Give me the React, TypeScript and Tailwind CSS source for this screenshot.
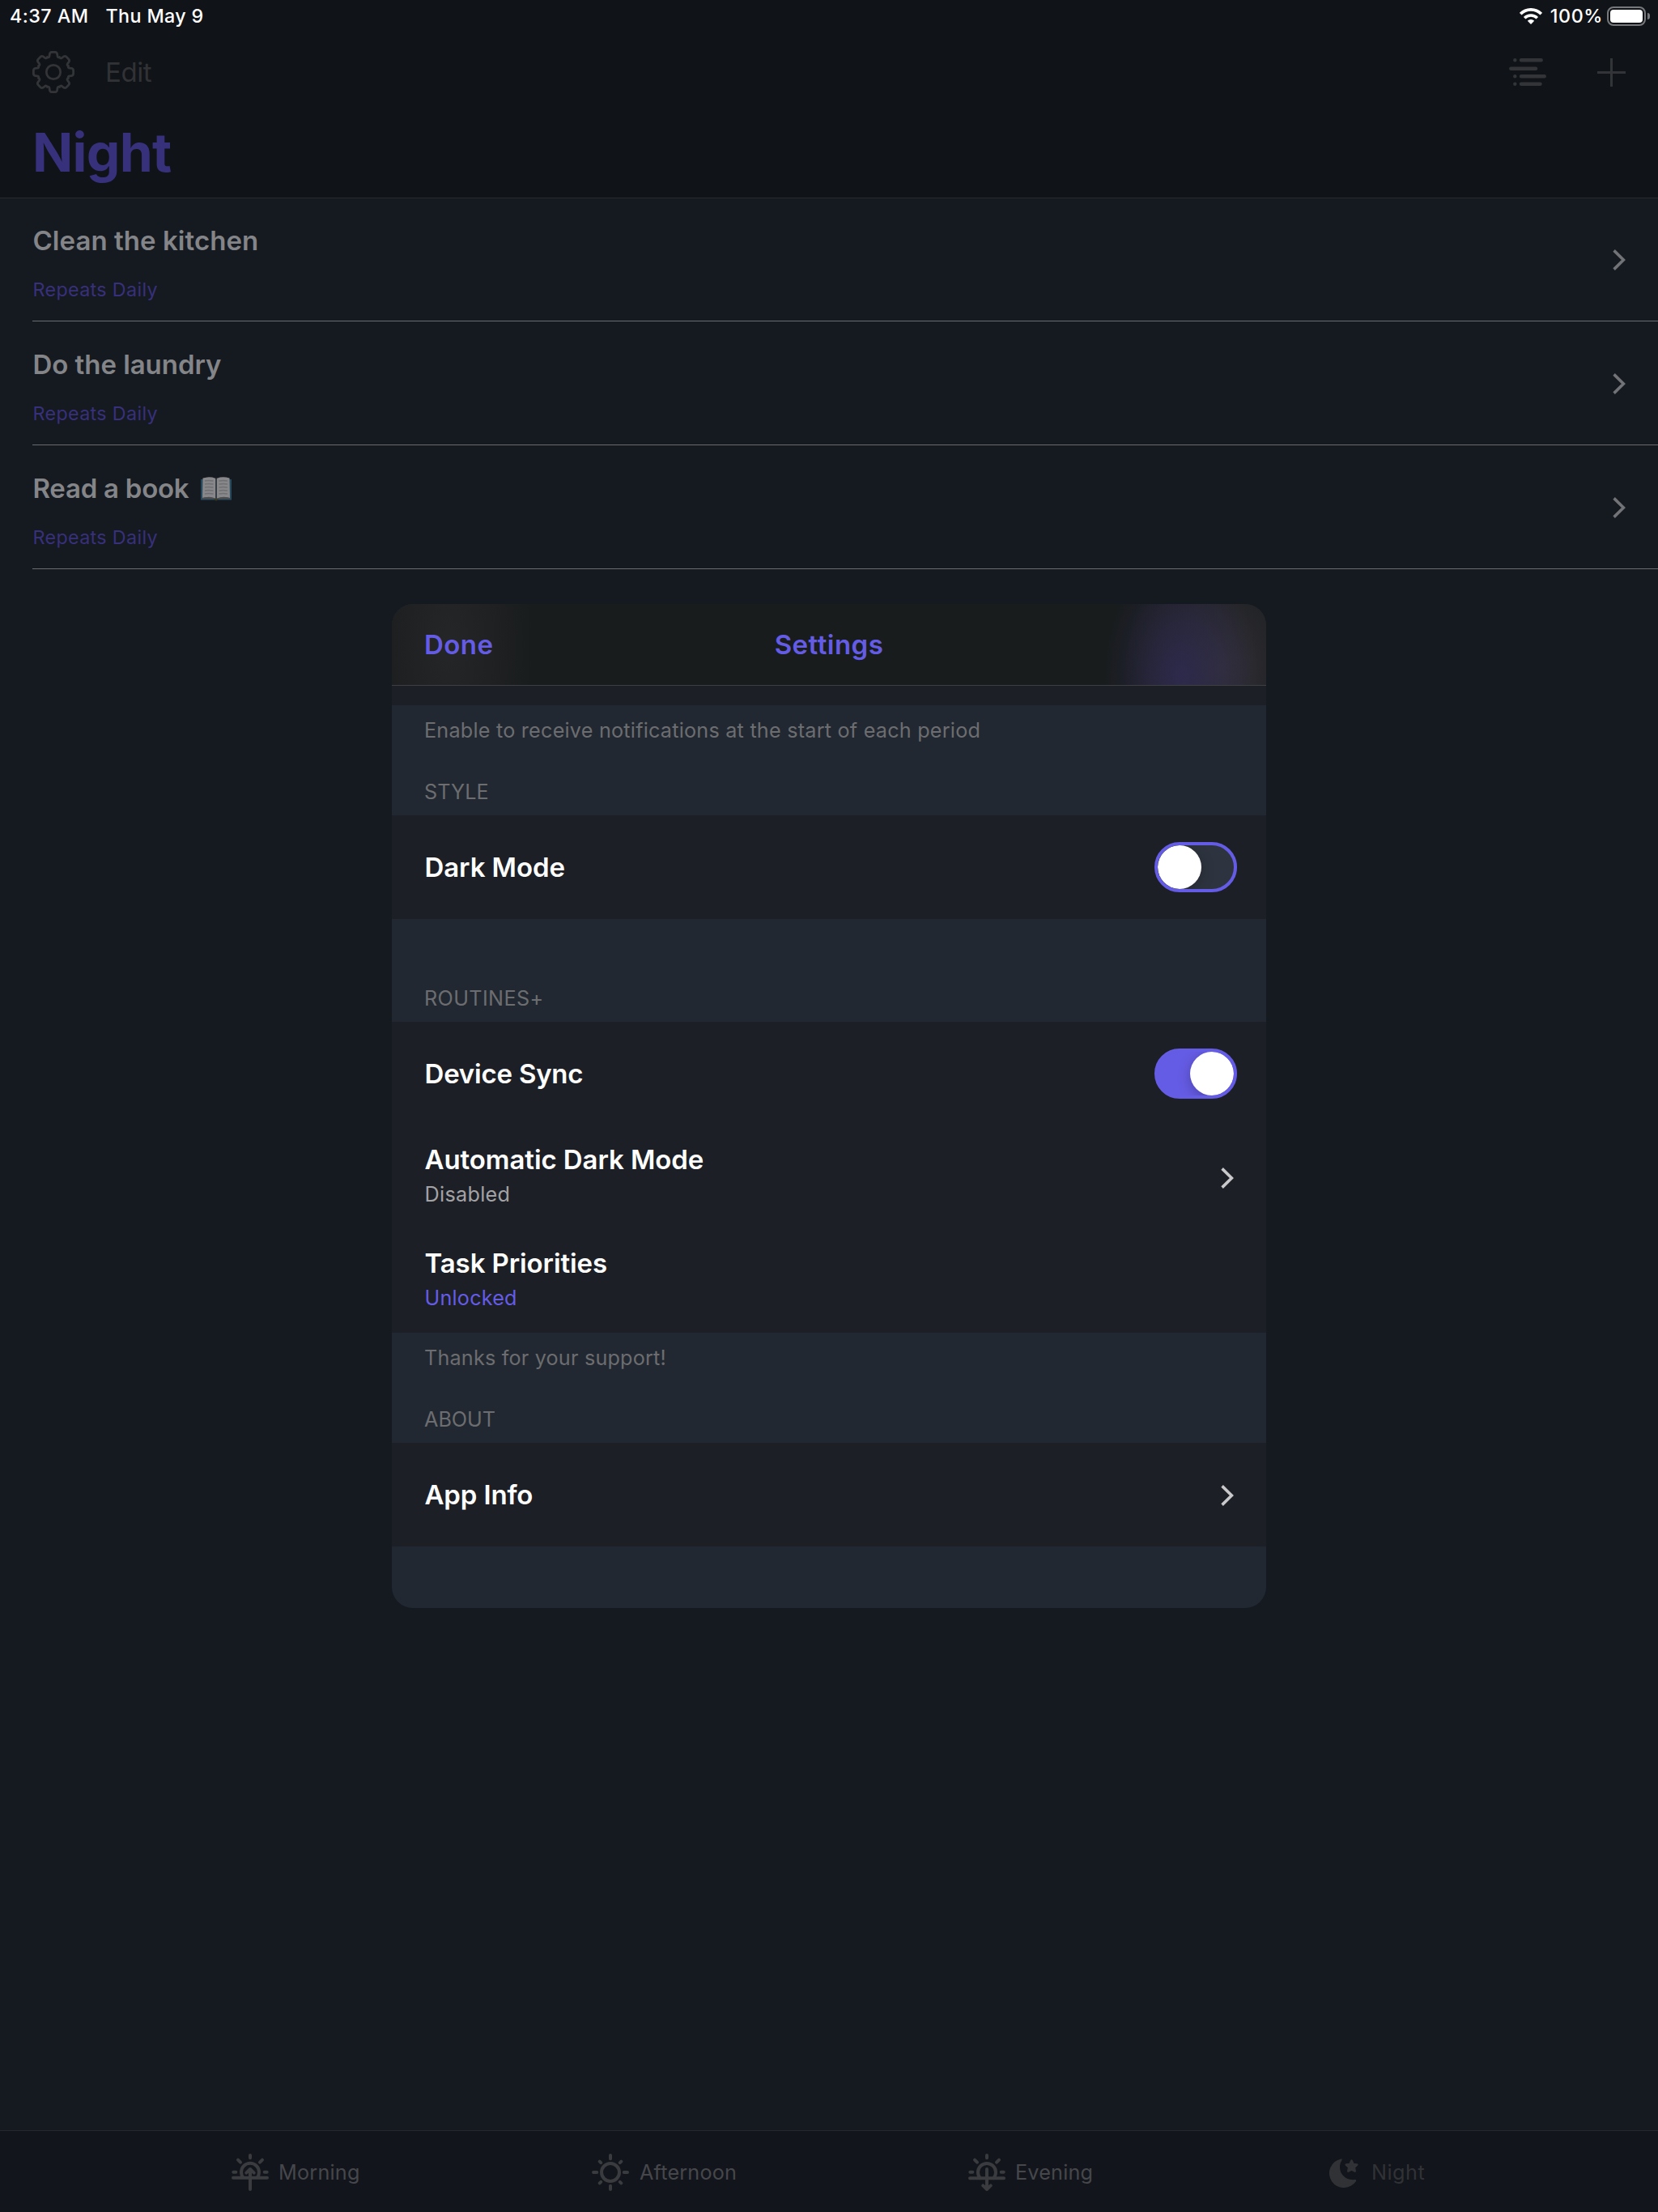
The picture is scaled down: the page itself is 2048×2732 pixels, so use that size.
import React from "react";

function Chevron({ className }: { className: string }) {
  return (
    <svg className={className} width="16" height="26" viewBox="0 0 16 26" fill="none" stroke="currentColor" strokeWidth="3.6">
      <path d="M1.6 1.4 L13.4 13 L1.6 24.6" />
    </svg>
  );
}

function WifiIcon() {
  return (
    <svg width="28" height="20" viewBox="0 0 28 20" fill="none" stroke="#fff">
      <path d="M1.2 7.2 A18.1 18.1 0 0 1 26.8 7.2" strokeWidth="3.8" />
      <path d="M6.2 12.2 A11 11 0 0 1 21.8 12.2" strokeWidth="3.6" />
      <path d="M14 20 L9.8 15.8 A6 6 0 0 1 18.2 15.8 Z" fill="#fff" stroke="none" />
    </svg>
  );
}

const TEETH = [0, 45, 90, 135, 180, 225, 270, 315];

function GearIcon() {
  return (
    <svg width="52" height="52" viewBox="-26 -26 52 52" fill="none" stroke="#323437" strokeWidth="2.8" strokeLinecap="round">
      {TEETH.map((angle) => (
        <path
          key={angle}
          transform={`rotate(${angle})`}
          d="M-7.6 -18.3 Q-5 -17.6 -4.9 -20.2 Q-4.8 -24.6 -2.2 -24.6 H2.2 Q4.8 -24.6 4.9 -20.2 Q5 -17.6 7.6 -18.3"
        />
      ))}
      <circle r="8.7" />
    </svg>
  );
}

function ListIcon() {
  return (
    <svg width="46" height="35" viewBox="0 0 46 35" fill="none" stroke="#323437" strokeWidth="4.5" strokeLinecap="round">
      <path d="M7.3 2.3 h.01 M15 2.3 H39.7 M2.3 12.8 H33 M7.3 22.2 h.01 M15 22.2 H43.7 M7.3 31.7 h.01 M15 31.7 H38.5" />
    </svg>
  );
}

function PlusIcon() {
  return (
    <svg width="35" height="35" viewBox="0 0 35 35" fill="none" stroke="#323437" strokeWidth="3">
      <path d="M17.5 0 V35 M0 17.5 H35" />
    </svg>
  );
}

function BookIcon() {
  return (
    <svg className="-mt-px" width="38" height="30" viewBox="0 0 38 30">
      <path d="M0 3 H38 V28.5 H0 Z" fill="#27495d" />
      <path d="M2.5 1.5 Q11 -1 18 1.8 V27 Q11 24 2 26 Z" fill="#88888b" />
      <path d="M35.5 1.5 Q27 -1 20 1.8 V27 Q27 24 36 26 Z" fill="#88888b" />
      <path d="M2 26 Q11 23.5 18 26.5 H20 Q27 23.5 36 26 V27.5 H2 Z" fill="#4b4c4e" />
      <path d="M19 1.5 V27" stroke="#3c3d40" strokeWidth="1.6" />
      <path
        d="M5 5 Q10 3.8 15.5 5 M5 9 Q10 7.8 15.5 9 M5 13 Q10 11.8 15.5 13 M5 17 Q10 15.8 15.5 17 M5 21 Q10 19.8 15.5 21 M22.5 5 Q28 3.8 33 5 M22.5 9 Q28 7.8 33 9 M22.5 13 Q28 11.8 33 13 M22.5 17 Q28 15.8 33 17 M22.5 21 Q28 19.8 33 21"
        fill="none"
        stroke="#6f7074"
        strokeWidth="1.5"
      />
      <path d="M16 27.3 H22 L19 29.8 Z" fill="#3a3a1c" />
    </svg>
  );
}

function SunriseIcon() {
  return (
    <svg width="46" height="46" viewBox="0 0 46 46" fill="none" stroke="#3a3b3f" strokeWidth="4" strokeLinecap="round" strokeLinejoin="round">
      <path d="M23 2 V5.3 M8 7.7 L11 10.7 M38 7.7 L35 10.7 M2.3 22.7 H5.3 M40.7 22.7 H43.7" />
      <path d="M14.5 29.7 A11 11 0 1 1 31.5 29.7 M2 29.7 H44" />
      <path d="M23 19 V44 M18.3 23.6 L23 19 L27.7 23.6" />
    </svg>
  );
}

function SunIcon() {
  return (
    <svg width="46" height="46" viewBox="0 0 46 46" fill="none" stroke="#3a3b3f" strokeWidth="4" strokeLinecap="round">
      <circle cx="23" cy="23" r="11" />
      <path d="M23 2 V6.3 M23 39.7 V44 M2 23 H6.3 M39.7 23 H44 M9.7 9.7 L11.2 11.2 M36.3 9.7 L34.8 11.2 M9.7 36.3 L11.2 34.8 M36.3 36.3 L34.8 34.8" />
    </svg>
  );
}

function SunsetIcon() {
  return (
    <svg width="46" height="46" viewBox="0 0 46 46" fill="none" stroke="#3a3b3f" strokeWidth="4" strokeLinecap="round" strokeLinejoin="round">
      <path d="M23 2 V5.3 M8 7.7 L11 10.7 M38 7.7 L35 10.7 M2.3 22.7 H5.3 M40.7 22.7 H43.7" />
      <path d="M14.8 30.3 A11 11 0 1 1 31.2 30.3 M2 30.3 H44" />
      <path d="M23 19 V44 M18.3 39.4 L23 44 L27.7 39.4" />
    </svg>
  );
}

function MoonIcon() {
  return (
    <svg className="mt-[2px]" width="36" height="36" viewBox="0 0 36 36" fill="#313236">
      <path d="M14.3 .4 A18 18 0 1 0 33 27.9 Q33.8 25.7 31.6 26 C21 27.3 13 20 13 10.5 C13 7 14 4.5 15.4 2.3 Q16.4 0 14.3 .4 Z" />
      <path
        d="M27.5 2.6 L29.5 7 L34.3 7.6 L30.8 10.9 L31.7 15.6 L27.5 13.3 L23.3 15.6 L24.2 10.9 L20.7 7.6 L25.5 7 Z"
        stroke="#313236"
        strokeWidth="2.6"
        strokeLinejoin="round"
      />
    </svg>
  );
}

function TaskRow({ title, tracking, children }: { title: string; tracking: string; children?: React.ReactNode }) {
  return (
    <li className="ml-10 flex h-[153px] items-center justify-between border-b border-[#6b6c70] pr-10">
      <div className="self-start pt-[34px] pl-[0.5px]">
        <div className={`flex h-10 items-center gap-[14.5px] text-[33px] font-semibold text-[#848588] ${tracking}`}>
          {title}
          {children}
        </div>
        <div className="mt-[25px] h-[30px] text-[23.3px] leading-[30px] tracking-[0.34px] text-[#37307b]">Repeats Daily</div>
      </div>
      <Chevron className="mt-[2px] text-[#727376]" />
    </li>
  );
}

function SectionHeader({ title, tracking }: { title: string; tracking: string }) {
  return <div className={`h-[30px] text-[25.2px] leading-[30px] text-[#6c6d70] ${tracking}`}>{title}</div>;
}

function SettingsRow({
  title,
  tracking,
  subtitle,
  accessory,
}: {
  title: string;
  tracking: string;
  subtitle?: React.ReactNode;
  accessory?: React.ReactNode;
}) {
  return (
    <div className="flex h-32 items-center justify-between bg-[#1d1f26] pl-[40.5px]">
      <div className={subtitle ? "self-start pt-[22px]" : ""}>
        <div className={`h-10 text-[33px] leading-10 font-semibold text-white ${tracking}`}>{title}</div>
        {subtitle}
      </div>
      {accessory}
    </div>
  );
}

function Toggle({ on }: { on?: boolean }) {
  return (
    <div
      className={
        on
          ? "mr-9 flex h-[62px] w-[102px] items-center justify-end overflow-hidden rounded-full border-4 border-[#655ce5] bg-[#655ce5]"
          : "mr-9 flex h-[62px] w-[102px] items-center overflow-hidden rounded-full border-4 border-[#655ce5] bg-[#2e343f]"
      }
    >
      <div className="size-[54px] rounded-full bg-white shadow-[0_4px_16px_rgba(0,0,0,0.25)]" />
    </div>
  );
}

export default function App() {
  return (
    <div className="relative flex h-[2732px] w-[2048px] flex-col overflow-hidden bg-[#151920] font-['Inter',sans-serif] whitespace-nowrap">
      <header className="flex h-[245px] flex-col border-b border-[#292b2e] bg-[#101317]">
        <div className="flex h-[39px] items-center justify-between pr-[10px] pl-[12px] text-[23.3px] font-medium text-white">
          <div className="flex gap-[21px] pt-[2px]">
            <span className="tracking-[0.47px]">4:37 AM</span>
            <span className="tracking-[0.35px]">Thu May 9</span>
          </div>
          <div className="flex items-center">
            <WifiIcon />
            <span className="ml-[10px] pt-[2px] tracking-[0.58px]">100%</span>
            <div className="mt-px ml-[5px] h-6 w-12 rounded-[8px] border-2 border-[#77787b] p-[2px]">
              <div className="h-4 rounded-[4px] bg-white" />
            </div>
            <div className="ml-[2px] h-2 w-[3px] rounded-r-full bg-[#77787b]" />
          </div>
        </div>
        <div className="flex h-[100px] items-center justify-between pr-10 pl-10">
          <div className="flex items-center gap-[38px]">
            <GearIcon />
            <span className="pt-[2px] text-[33px] tracking-[-0.4px] text-[#303235]">Edit</span>
          </div>
          <div className="flex items-center gap-[63px]">
            <ListIcon />
            <PlusIcon />
          </div>
        </div>
        <h1 className="h-[98px] pl-10 text-[66px] leading-[98px] font-bold tracking-[-0.75px] text-[#37307b]">Night</h1>
      </header>

      <ul className="-mt-px flex-1">
        <TaskRow title="Clean the kitchen" tracking="tracking-[0.05px]" />
        <TaskRow title="Do the laundry" tracking="tracking-[-0.05px]" />
        <TaskRow title="Read a book" tracking="tracking-[-0.25px]">
          <BookIcon />
        </TaskRow>
      </ul>

      <nav className="flex h-[101px] items-center border-t border-[#26282e] bg-[#12151b] pt-[2px] pl-[286px] text-[25.2px] text-[#46474b]">
        <div className="flex w-[445px] items-center gap-[12px] tracking-[0.23px]">
          <SunriseIcon />
          <span className="pt-px">Morning</span>
        </div>
        <div className="flex w-[465px] items-center gap-[13px] tracking-[0.19px]">
          <SunIcon />
          <span className="pt-px">Afternoon</span>
        </div>
        <div className="flex w-[446px] items-center gap-[12px] tracking-[0.19px]">
          <SunsetIcon />
          <span className="pt-px">Evening</span>
        </div>
        <div className="flex items-center gap-[16px] tracking-[0.5px] text-[#313236]">
          <MoonIcon />
          <span className="pt-px">Night</span>
        </div>
      </nav>

      <section className="absolute top-[746px] left-[484px] flex h-[1240px] w-[1080px] flex-col overflow-hidden rounded-[26px] bg-[#222831]">
        <div className="grid h-[101px] grid-cols-3 items-center border-b border-[#3d3f42] bg-[#191c1d] bg-[radial-gradient(ellipse_95px_150px_at_975px_90px,rgba(46,42,84,0.8),transparent),radial-gradient(ellipse_120px_160px_at_1025px_80px,rgba(60,56,64,0.7),transparent),radial-gradient(ellipse_105px_240px_at_70px_50px,rgba(41,41,43,0.75),transparent)] pt-px text-[33px] font-semibold text-[#655ce5]">
          <span className="pl-[40px] tracking-[0.45px]">Done</span>
          <span className="text-center tracking-[0.47px]">Settings</span>
        </div>
        <div className="h-6 bg-[#1d1f26]" />
        <div className="flex h-[136px] flex-col justify-between pt-4 pb-[14px] pl-[40px]">
          <p className="h-[30px] text-[25.2px] leading-[30px] tracking-[0.22px] text-[#6c6d70]">
            Enable to receive notifications at the start of each period
          </p>
          <SectionHeader title="STYLE" tracking="tracking-[0.06px]" />
        </div>
        <SettingsRow title="Dark Mode" tracking="tracking-[-0.08px]" accessory={<Toggle />} />
        <div className="flex h-[127px] flex-col justify-end pb-[14px] pl-[40px]">
          <SectionHeader title="ROUTINES+" tracking="tracking-[0.37px]" />
        </div>
        <SettingsRow title="Device Sync" tracking="tracking-[-0.2px]" accessory={<Toggle on />} />
        <SettingsRow
          title="Automatic Dark Mode"
          tracking="tracking-[-0.08px]"
          subtitle={<div className="mt-2 h-[30px] text-[25.2px] leading-[30px] tracking-[0.3px] text-[#a3a3a5]">Disabled</div>}
          accessory={<Chevron className="mt-px mr-10 text-[#c9c9cc]" />}
        />
        <SettingsRow
          title="Task Priorities"
          tracking="tracking-[-0.1px]"
          subtitle={<div className="mt-2 h-[30px] text-[25.2px] leading-[30px] tracking-[0.2px] text-[#655ce5]">Unlocked</div>}
        />
        <div className="flex h-[136px] flex-col justify-between pt-4 pb-[14px] pl-[40px]">
          <p className="h-[30px] text-[25.2px] leading-[30px] tracking-[0.19px] text-[#6c6d70]">Thanks for your support!</p>
          <SectionHeader title="ABOUT" tracking="tracking-normal" />
        </div>
        <SettingsRow title="App Info" tracking="tracking-[-0.15px]" accessory={<Chevron className="mt-px mr-10 text-[#c9c9cc]" />} />
      </section>
    </div>
  );
}
